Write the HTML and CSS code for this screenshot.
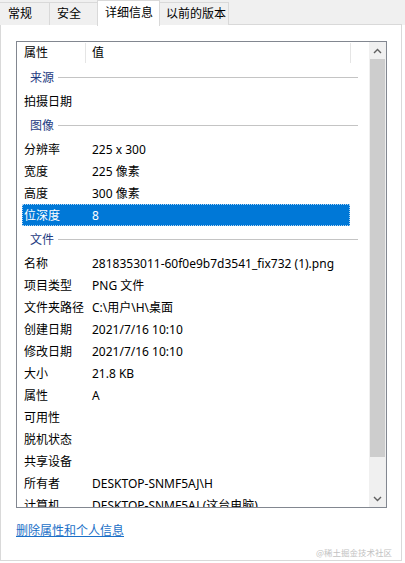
FILE: index.html
```html
<!DOCTYPE html>
<html lang="zh-CN">
<head>
    <meta charset="UTF-8">
    <meta name="viewport" content="width=device-width, initial-scale=1.0">
    <title>属性 - 详细信息</title>
    <link rel="stylesheet" href="styles.css">
</head>
<body>
    <div class="dialog">
        <div class="tabs">
            <div class="tab tab-general">常规</div>
            <div class="tab tab-security">安全</div>
            <div class="tab tab-details active">详细信息</div>
            <div class="tab tab-versions">以前的版本</div>
        </div>

        <div class="panel">
            <div class="list">
                <div class="list-main">
                    <div class="list-head">
                        <div class="head-cell head-name">属性</div>
                        <div class="head-cell head-value">值</div>
                    </div>

                    <div class="group"><span>来源</span><i class="group-line"></i></div>
                    <div class="row"><span class="key">拍摄日期</span><span class="val"></span></div>

                    <div class="group"><span>图像</span><i class="group-line"></i></div>
                    <div class="row"><span class="key">分辨率</span><span class="val">225 x 300</span></div>
                    <div class="row"><span class="key">宽度</span><span class="val">225 像素</span></div>
                    <div class="row"><span class="key">高度</span><span class="val">300 像素</span></div>
                    <div class="row selected"><span class="key">位深度</span><span class="val">8</span></div>

                    <div class="group"><span>文件</span><i class="group-line"></i></div>
                    <div class="row"><span class="key">名称</span><span class="val">2818353011-60f0e9b7d3541_fix732 (1).png</span></div>
                    <div class="row"><span class="key">项目类型</span><span class="val">PNG 文件</span></div>
                    <div class="row"><span class="key">文件夹路径</span><span class="val">C:\用户\H\桌面</span></div>
                    <div class="row"><span class="key">创建日期</span><span class="val">2021/7/16 10:10</span></div>
                    <div class="row"><span class="key">修改日期</span><span class="val">2021/7/16 10:10</span></div>
                    <div class="row"><span class="key">大小</span><span class="val">21.8 KB</span></div>
                    <div class="row"><span class="key">属性</span><span class="val">A</span></div>
                    <div class="row"><span class="key">可用性</span><span class="val"></span></div>
                    <div class="row"><span class="key">脱机状态</span><span class="val"></span></div>
                    <div class="row"><span class="key">共享设备</span><span class="val"></span></div>
                    <div class="row"><span class="key">所有者</span><span class="val">DESKTOP-SNMF5AJ\H</span></div>
                    <div class="row"><span class="key">计算机</span><span class="val">DESKTOP-SNMF5AJ (这台电脑)</span></div>
                </div>

                <div class="scrollbar">
                    <div class="arrow">
                        <svg width="9" height="6" viewBox="0 0 9 6"><path d="M1 5 L4.5 1.5 L8 5" fill="none" stroke="#606060" stroke-width="1.4"/></svg>
                    </div>
                    <div class="track">
                        <div class="thumb"></div>
                    </div>
                    <div class="arrow">
                        <svg width="9" height="6" viewBox="0 0 9 6"><path d="M1 1 L4.5 4.5 L8 1" fill="none" stroke="#606060" stroke-width="1.4"/></svg>
                    </div>
                </div>
            </div>

            <a class="remove-link" href="#">删除属性和个人信息</a>
        </div>

        <span class="watermark">@稀土掘金技术社区</span>
    </div>
</body>
</html>
```

FILE: styles.css
```css
* {
    box-sizing: border-box;
}
body {
    margin: 0;
    background-color: #ffffff;
    font-family: "Noto Sans", "Noto Sans CJK SC", sans-serif;
    font-size: 12px;
    color: #000;
}
.dialog {
    position: relative;
    width: 405px;
    height: 563px;
}

/* Вкладки */
.tabs {
    display: flex;
    height: 25px;
    background-color: #f0f0f0;
    align-items: flex-end;
}
.tab {
    height: 23px;
    line-height: 21px;
    padding-left: 7px;
    border: 1px solid #d9d9d9;
    border-left: none;
    border-bottom: none;
    background-color: #f0f0f0;
    white-space: nowrap;
}
.tab-general {
    width: 50px;
    padding-left: 8px;
}
.tab-security {
    width: 48px;
}
.tab-details {
    width: 62px;
}
.tab-versions {
    width: 69px;
    padding-left: 6px;
}
.tab.active {
    position: relative;
    height: 26px;
    line-height: 24px;
    margin-bottom: -1px;
    margin-left: -1px;
    width: 63px;
    padding-left: 7px;
    border-left: 1px solid #d9d9d9;
    background-color: #fff;
    z-index: 1;
}

/* Панель */
.panel {
    width: 402px;
    height: 537px;
    margin-top: -1px;
    padding: 16px 15px 0;
    border: 1px solid #d9d9d9;
    background-color: #fff;
}
.list {
    display: flex;
    width: 371px;
    height: 467px;
    border: 1px solid #828790;
    overflow: hidden;
}
.list-main {
    width: 352px;
    overflow: hidden;
}
.list-head {
    display: flex;
    height: 22px;
}
.head-cell {
    line-height: 22px;
    border-right: 1px solid #e5e5e5;
    margin: 1px 0;
    line-height: 20px;
}
.head-name {
    width: 69px;
    padding-left: 7px;
}
.head-value {
    width: 265px;
    padding-left: 6px;
}
.group {
    display: flex;
    align-items: center;
    gap: 4px;
    width: 341px;
    height: 26px;
    padding-left: 13px;
    color: #1e3c82;
}
.group-line {
    flex: 1;
    height: 1px;
    background-color: #c4c4c4;
}
.row {
    display: flex;
    align-items: center;
    width: 328px;
    height: 22px;
    margin-left: 5px;
    white-space: nowrap;
}
.row .key {
    width: 70px;
    padding-left: 2px;
}
.row .val {
    flex: 1;
}
.row.selected {
    background-color: #0078d7;
    color: #fff;
    outline: 1px dotted rgba(255, 255, 255, 0.7);
    outline-offset: -1px;
}

/* Полоса прокрутки */
.scrollbar {
    display: flex;
    flex-direction: column;
    width: 17px;
    background-color: #f0f0f0;
}
.arrow {
    display: flex;
    align-items: center;
    justify-content: center;
    height: 17px;
}
.track {
    flex: 1;
}
.thumb {
    height: 398px;
    margin: 0 1px;
    background-color: #cdcdcd;
}

.remove-link {
    display: inline-block;
    margin-top: 15px;
    color: #1a6fc7;
    text-decoration: underline;
    line-height: 16px;
}

.watermark {
    position: absolute;
    right: 13px;
    top: 546px;
    font-size: 8.5px;
    color: #c2c2c2;
    font-family: "Noto Sans CJK SC", sans-serif;
}
```
